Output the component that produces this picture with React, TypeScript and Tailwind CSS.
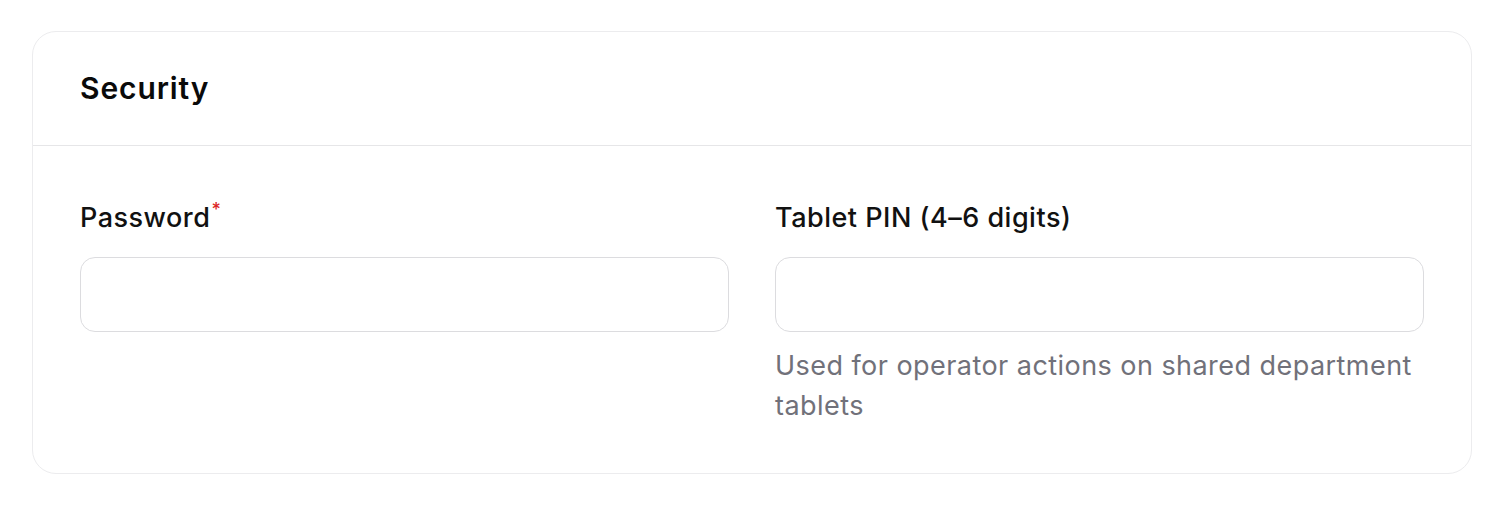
import React from "react";

type FieldProps = {
    label: string;
    required?: boolean;
    hint?: string;
    type?: string;
};

const Field: React.FC<FieldProps> = ({ label, required, hint, type = "text" }) => {
    return (
        <div className="flex flex-col">
            <label className="mb-[21px] text-[27px] leading-[36px] font-medium tracking-[0.5px] text-[#111111]">
                {label}
                {required && (
                    <span className="relative -top-[11px] ml-[1px] text-[18px] leading-none text-[#dc2626]">*</span>
                )}
            </label>
            <input
                type={type}
                className="h-[75px] w-full rounded-[15px] border-[1.5px] border-[#dcdcdf] bg-white px-[20px] text-[24px] outline-none"
            />
            {hint && (
                <p className="mt-[14px] text-[27px] leading-[40px] tracking-[0.45px] text-[#71717a]">{hint}</p>
            )}
        </div>
    );
};

export default function App() {
    return (
        <div
            className="min-h-screen bg-white px-[32px] pt-[31px]"
            style={{ fontFamily: "Inter, 'Noto Sans', sans-serif" }}
        >
            <section className="rounded-[24px] border-[1.5px] border-[#ececee] bg-white">
                {/* header */}
                <div className="border-b-[1.5px] border-[#e6e6e8] px-[47px] pt-[36px] pb-[37px]">
                    <h2 className="text-[30px] leading-[40px] font-semibold tracking-[0.9px] text-[#0a0a0a]">Security</h2>
                </div>

                {/* body */}
                <div className="grid grid-cols-2 gap-x-[46px] px-[47px] pt-[54px] pb-[47px]">
                    <Field label="Password" required type="password" />
                    <Field
                        label="Tablet PIN (4–6 digits)"
                        hint="Used for operator actions on shared department tablets"
                    />
                </div>
            </section>
        </div>
    );
}
